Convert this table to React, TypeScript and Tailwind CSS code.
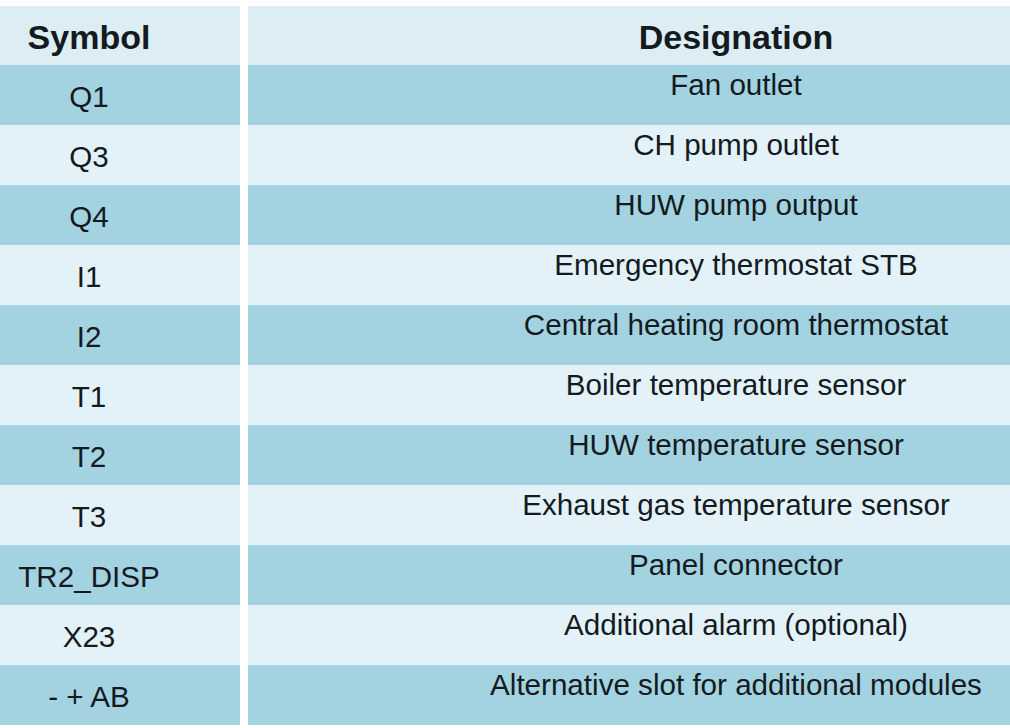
import React from "react";

const rows: [string, string][] = [
  ["Q1", "Fan outlet"],
  ["Q3", "CH pump outlet"],
  ["Q4", "HUW pump output"],
  ["I1", "Emergency thermostat STB"],
  ["I2", "Central heating room thermostat"],
  ["T1", "Boiler temperature sensor"],
  ["T2", "HUW temperature sensor"],
  ["T3", "Exhaust gas temperature sensor"],
  ["TR2_DISP", "Panel connector"],
  ["X23", "Additional alarm (optional)"],
  ["- + AB", "Alternative slot for additional modules"],
];

export default function App() {
  return (
    <div
      className="w-[1010px] h-[728px] bg-white pt-[6px] overflow-hidden text-[#141a1e]"
      style={{ fontFamily: '"Liberation Sans", Arial, sans-serif' }}
    >
      <div className="grid grid-cols-[240px_762px] gap-x-2">
        <div className="h-[59px] bg-[#dcedf3] pr-[62px] pt-[14px] text-center text-[34px] leading-[34px] font-bold whitespace-nowrap">
          Symbol
        </div>
        <div className="h-[59px] bg-[#dcedf3] pl-[214px] pt-[14px] text-center text-[34px] leading-[34px] font-bold whitespace-nowrap">
          Designation
        </div>
        {rows.map(([s, d], i) => {
          const bg = i % 2 === 0 ? "bg-[#a3d3e1]" : "bg-[#e3f2f8]";
          return (
            <React.Fragment key={s}>
              <div
                className={`h-[60px] ${bg} pr-[62px] pt-[17px] text-center text-[29.6px] leading-[30px] whitespace-nowrap`}
              >
                {s}
              </div>
              <div
                className={`h-[60px] ${bg} pl-[214px] pt-[5px] text-center text-[29.6px] leading-[30px] whitespace-nowrap`}
              >
                {d}
              </div>
            </React.Fragment>
          );
        })}
      </div>
    </div>
  );
}
